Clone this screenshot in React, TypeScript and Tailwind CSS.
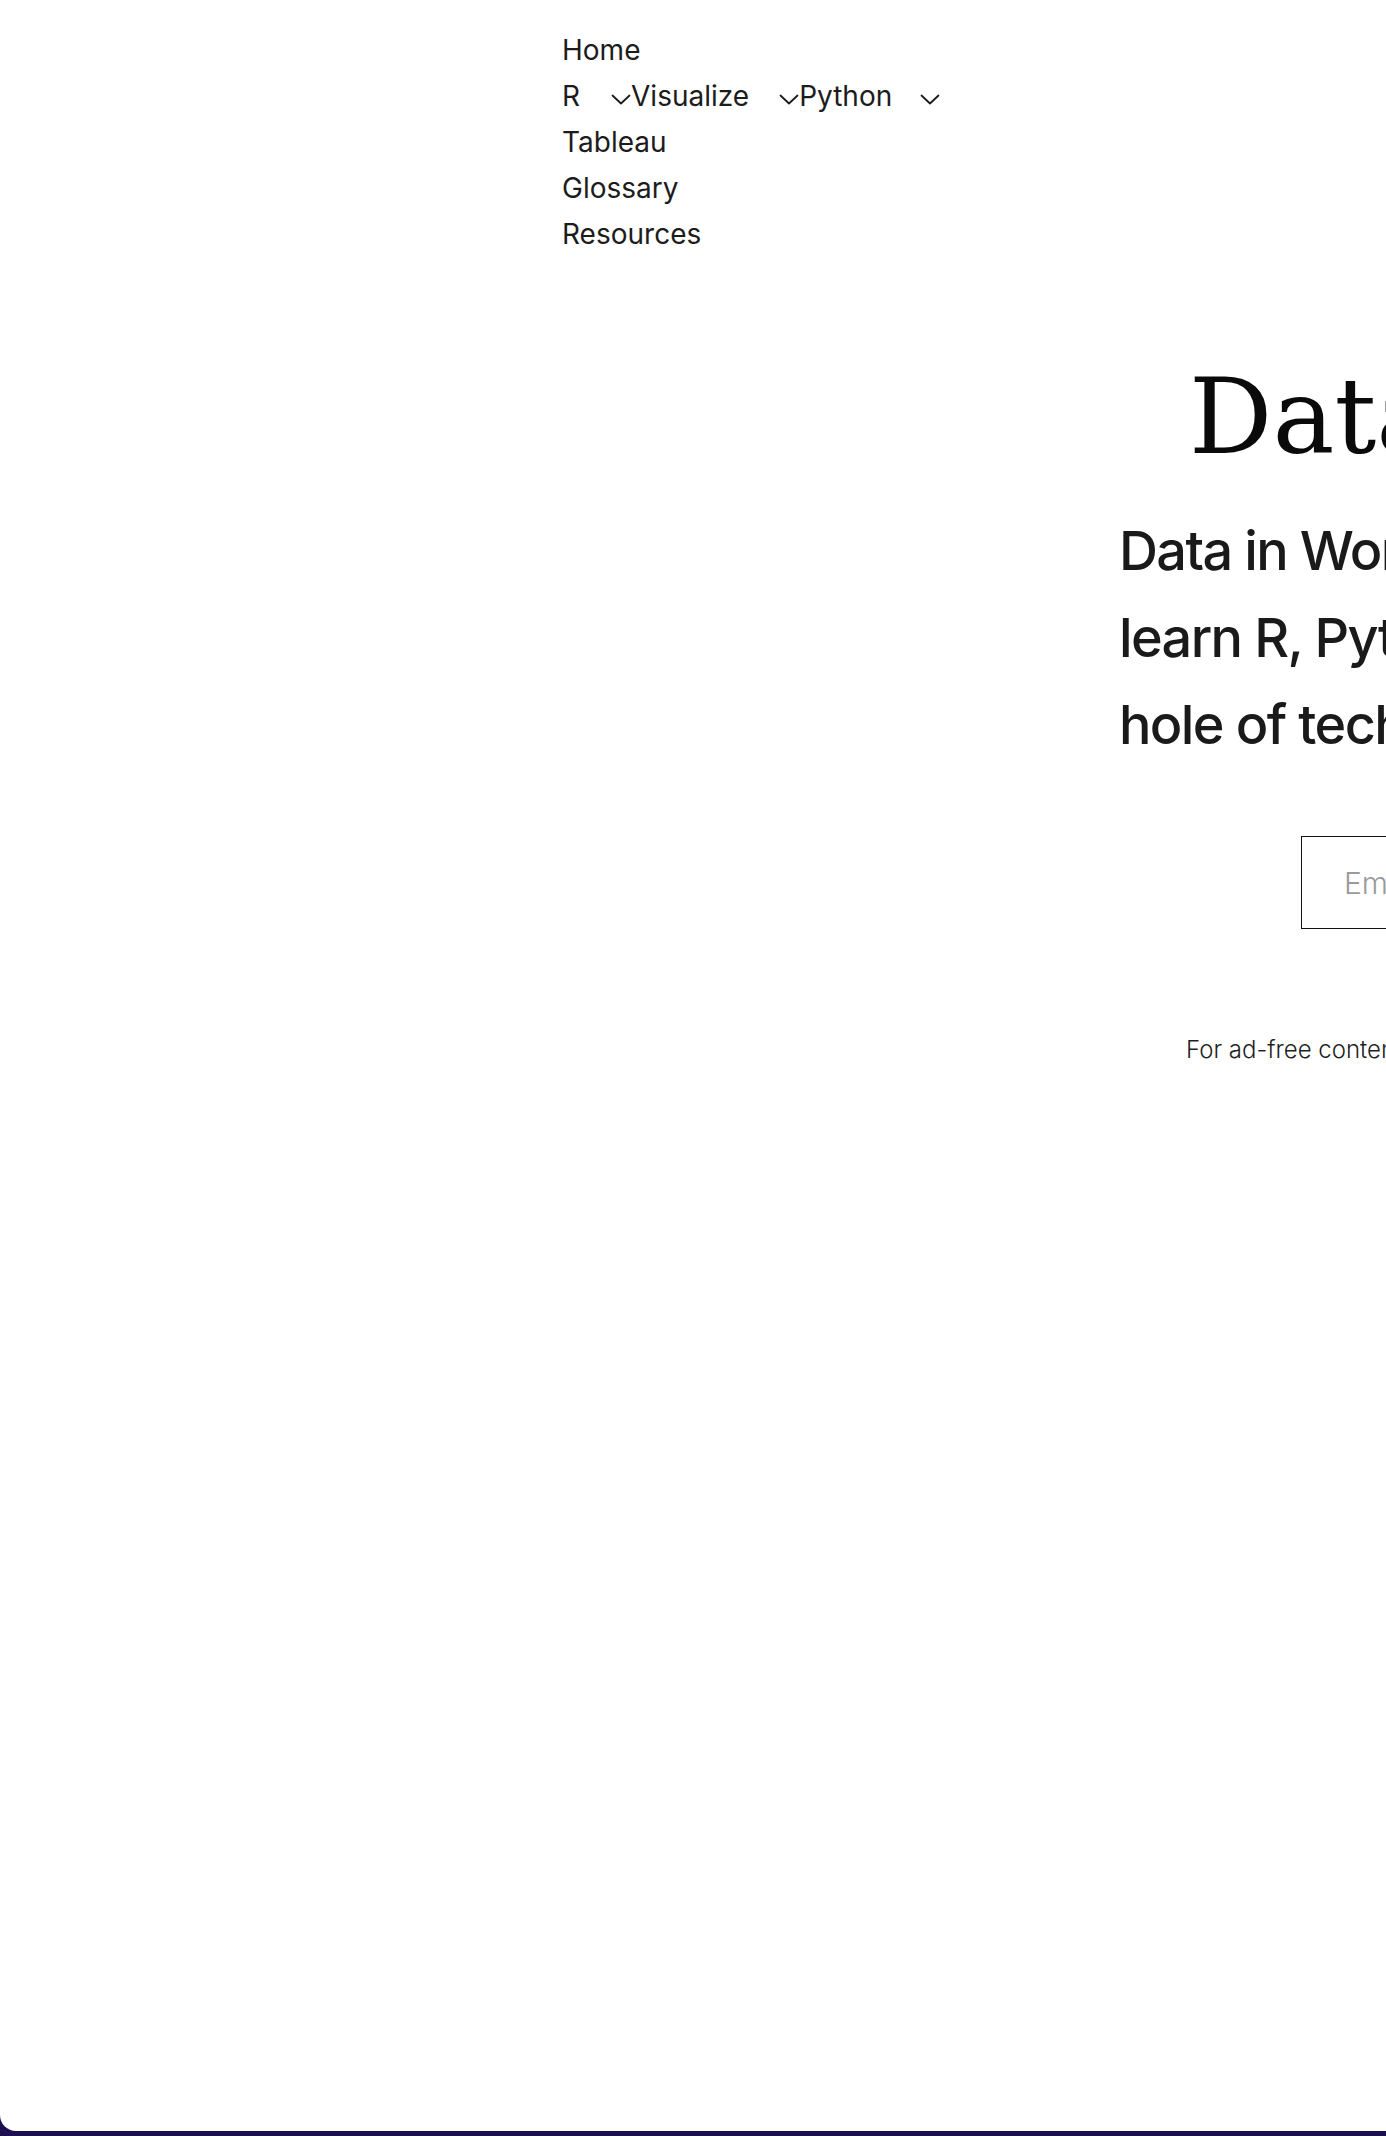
import React from "react";

function Chevron({ className = "" }: { className?: string }) {
  return (
    <svg
      viewBox="0 0 20 11"
      className={"w-[20px] h-[11px] shrink-0 " + className}
      fill="none"
      stroke="#1c1c1c"
      strokeWidth="1.8"
      strokeLinecap="round"
      strokeLinejoin="round"
    >
      <polyline points="1.5,1.5 10,9.5 18.5,1.5" />
    </svg>
  );
}

export default function App() {
  return (
    <div
      className="w-full overflow-hidden bg-[#1d0f50]"
      style={{ fontFamily: "Inter, 'Liberation Sans', sans-serif" }}
    >
      <div className="w-[2400px] min-h-[2131px] bg-white rounded-b-2xl">
        <nav className="pl-[562px] pt-[27px] text-[28px] leading-[46px] text-[#1c1c1c]">
          <ul>
            <li>Home</li>
            <li className="flex items-center">
              <span>R</span>
              <Chevron className="ml-[31px] mt-[6px]" />
              <span>Visualize</span>
              <Chevron className="ml-[30px] mt-[6px]" />
              <span>Python</span>
              <Chevron className="ml-[28px] mt-[6px]" />
            </li>
            <li>Tableau</li>
            <li>Glossary</li>
            <li>Resources</li>
          </ul>
        </nav>

        <section className="flex flex-col">
          <h1
            className="ml-[1189px] mt-[108px] text-[104px] leading-none text-[#0a0a0a] whitespace-nowrap"
            style={{ fontFamily: "'DejaVu Serif', 'Liberation Serif', serif" }}
          >
            Data in Wonderland
          </h1>

          <p className="ml-[1119px] mt-[38px] w-[1000px] text-[54px] leading-[87px] font-medium tracking-[-0.03em] text-[#1a1a1a]">
            <span className="block whitespace-nowrap">Data in Wonderland helps you</span>
            <span className="block whitespace-nowrap">learn R, Python and Tableau without the rabbit</span>
            <span className="block whitespace-nowrap">hole of technical jargon.</span>
          </p>

          <form className="ml-[1301px] mt-[68px] flex">
            <input
              type="email"
              placeholder="Email"
              className="h-[93px] w-[520px] border border-[#111] pl-[42px] text-[30px] font-light text-[#111] placeholder:text-[#9a9a9a] outline-none"
            />
            <button
              type="button"
              className="h-[93px] px-[40px] bg-[#1d0f50] text-white text-[26px]"
            >
              Subscribe
            </button>
          </form>

          <p className="ml-[1186px] mt-[104px] text-[24px] leading-[34px] font-light text-[#1f1f1f] whitespace-nowrap">
            For ad-free content and exclusive tutorials, become a member.
          </p>
        </section>
      </div>
      <footer className="h-[300px]" />
    </div>
  );
}
